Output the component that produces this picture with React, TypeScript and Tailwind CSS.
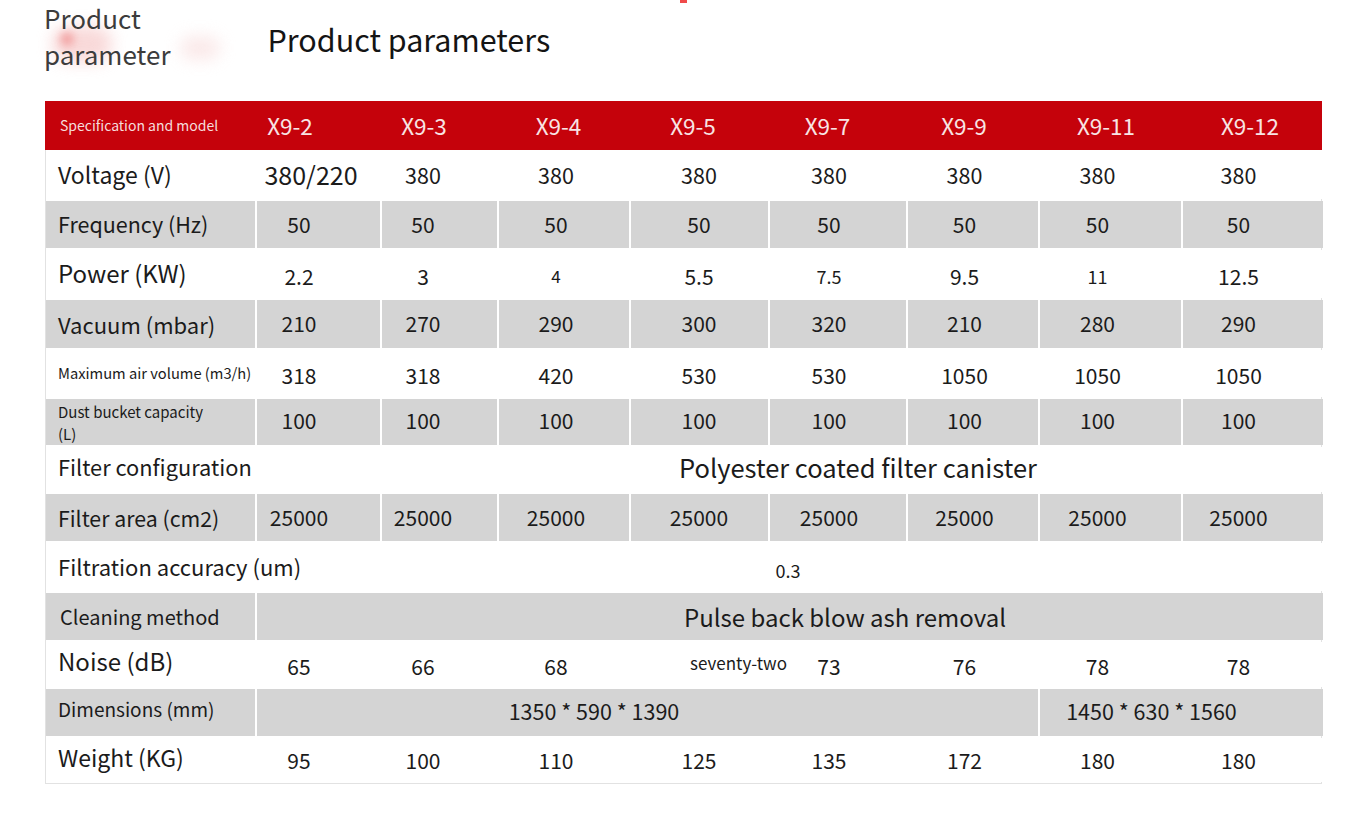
import React from 'react'

type Cell = { text: string; span?: string; cls?: string }
type Row = { label: React.ReactNode; labelCls: string; gray: boolean; cells: Cell[] }

// nudges the printed values a little left of the cell centre, as in the source sheet
const shift = ['pr-[39px]', 'pr-[33px]', 'pr-[16px]', 'pr-[1px]', 'pr-[18px]', 'pr-[17px]', 'pr-[26px]', 'pr-[29px]']

const models = ['X9-2', 'X9-3', 'X9-4', 'X9-5', 'X9-7', 'X9-9', 'X9-11', 'X9-12']

const plain = (vals: string[], cls = 'text-[21px]'): Cell[] => vals.map((v) => ({ text: v, cls }))

const rows: Row[] = [
  {
    label: 'Voltage (V)',
    labelCls: 'text-[23px]',
    gray: false,
    cells: [{ text: '380/220', cls: 'text-[25px] !pr-[15px]' }, ...plain(['380', '380', '380', '380', '380', '380', '380'], 'text-[21.5px] pt-[2px]')],
  },
  { label: 'Frequency (Hz)', labelCls: 'text-[21.5px]', gray: true, cells: plain(['50', '50', '50', '50', '50', '50', '50', '50']) },
  {
    label: 'Power (KW)',
    labelCls: 'text-[24px] pb-[2px]',
    gray: false,
    cells: [
      { text: '2.2', cls: 'text-[21px] pt-[6px]' },
      { text: '3', cls: 'text-[21px] pt-[6px]' },
      { text: '4', cls: 'text-[17px] pt-[4px]' },
      { text: '5.5', cls: 'text-[21px] pt-[6px]' },
      { text: '7.5', cls: 'text-[18px] pt-[4px]' },
      { text: '9.5', cls: 'text-[21px] pt-[6px]' },
      { text: '11', cls: 'text-[18px] pt-[4px]' },
      { text: '12.5', cls: 'text-[21px] pt-[6px]' },
    ],
  },
  { label: 'Vacuum (mbar)', labelCls: 'text-[22px]', gray: true, cells: plain(['210', '270', '290', '300', '320', '210', '280', '290']) },
  {
    label: 'Maximum air volume (m3/h)',
    labelCls: 'text-[14.7px]',
    gray: false,
    cells: plain(['318', '318', '420', '530', '530', '1050', '1050', '1050'], 'text-[21px] pt-[4px]'),
  },
  {
    label: (
      <span className="flex flex-col leading-[22px] pt-[2px]">
        <span>Dust bucket capacity</span>
        <span>(L)</span>
      </span>
    ),
    labelCls: 'text-[15px]',
    gray: true,
    cells: plain(['100', '100', '100', '100', '100', '100', '100', '100'], 'text-[21px] pb-[2px]'),
  },
  {
    label: 'Filter configuration',
    labelCls: 'text-[21.8px] pb-[5px]',
    gray: false,
    cells: [{ text: 'Polyester coated filter canister', span: 'col-span-8', cls: 'text-[25.5px] pl-[136px] pb-[4px]' }],
  },
  { label: 'Filter area (cm2)', labelCls: 'text-[21.3px]', gray: true, cells: plain(['25000', '25000', '25000', '25000', '25000', '25000', '25000', '25000']) },
  {
    label: 'Filtration accuracy (um)',
    labelCls: 'text-[22px] whitespace-nowrap pb-[2px] relative z-10 !bg-transparent',
    gray: false,
    cells: [{ text: '0.3', span: 'col-span-8', cls: 'text-[18px] pt-[6px] pr-[4px]' }],
  },
  {
    label: 'Cleaning method',
    labelCls: 'text-[20px] pl-[14px]',
    gray: true,
    cells: [{ text: 'Pulse back blow ash removal', span: 'col-span-8', cls: 'text-[24px] pl-[110px]' }],
  },
  {
    label: 'Noise (dB)',
    labelCls: 'text-[24px] pb-[8px]',
    gray: false,
    cells: [
      { text: '65', cls: 'text-[21px] pt-[4px]' },
      { text: '66', cls: 'text-[21px] pt-[4px]' },
      { text: '68', cls: 'text-[21px] pt-[4px]' },
      { text: 'seventy-two', cls: 'text-[17px] pb-[4px] !pr-0 pl-[78px] relative z-10 !bg-transparent' },
      { text: '73', cls: 'text-[21px] pt-[4px]' },
      { text: '76', cls: 'text-[21px] pt-[4px]' },
      { text: '78', cls: 'text-[21px] pt-[4px]' },
      { text: '78', cls: 'text-[21px] pt-[4px]' },
    ],
  },
  {
    label: 'Dimensions (mm)',
    labelCls: 'text-[19px] pb-[6px]',
    gray: true,
    cells: [
      { text: '1350 * 590 * 1390', span: 'col-span-6', cls: 'text-[21.5px] pb-[2px] pr-[107px]' },
      { text: '1450 * 630 * 1560', span: 'col-span-2', cls: 'text-[21.5px] pb-[2px] pr-[60px]' },
    ],
  },
  { label: 'Weight (KG)', labelCls: 'text-[23px] pb-[6px]', gray: false, cells: plain(['95', '100', '110', '125', '135', '172', '180', '180'], 'text-[21px] pt-[2px]') },
]

export default function App() {
  return (
    <div
      className="relative w-[1353px] h-[815px] overflow-hidden bg-white text-[#1b1b1b]"
      style={{ fontFamily: '"Noto Sans CJK SC", "Noto Sans", "Liberation Sans", sans-serif' }}
    >
      {/* faded watermark behind the small heading */}
      <div className="absolute left-[52px] top-[26px] w-[60px] h-[36px] rounded-full bg-[#f6c9c9] blur-[8px] opacity-70" />
      <div className="absolute left-[60px] top-[32px] w-[14px] h-[14px] rounded-full bg-[#f08a8a] blur-[4px] opacity-70" />
      <div className="absolute left-[180px] top-[36px] w-[40px] h-[24px] rounded-full bg-[#f8dcdc] blur-[8px] opacity-60" />
      <div className="absolute left-[680px] top-0 w-[7px] h-[3px] bg-[#f04a4a]" />

      {/* Heading */}
      <div className="relative flex items-start h-[101px]">
        <div className="pl-[44px] text-[26px] leading-[36px] text-[#3c3c3c]">
          <p>Product</p>
          <p>parameter</p>
        </div>
        <p className="ml-[97px] mt-[17px] text-[30.5px] leading-[44px] text-[#141414]">Product parameters</p>
      </div>

      {/* Table */}
      <div className="ml-[45px] w-[1277px]">
        <div className="grid grid-cols-[178px_134px_134px_135px_134px_135px_138px_146px_142px] h-[49px] bg-[#c5020b] items-center">
          <p className="pl-[15px] text-[14px] text-[#f6dcdc]">Specification and model</p>
          {models.map((m) => (
            <p key={m} className="text-center text-[22.5px] text-[#f8e4e4]">
              {m}
            </p>
          ))}
        </div>

        <div className="grid grid-cols-[209px_123px_115px_130px_137px_136px_130px_141px_140px] grid-rows-[49px_47px_48px_48px_47px_46px_45px_47px_48px_47px_45px_47px_44px] gap-x-[2px] gap-y-[2px] border-l border-r border-b border-[#e2e2e2] pb-[1px]">
          {rows.map((r, ri) => {
            const bg = r.gray ? 'bg-[#d4d4d4]' : 'bg-white'
            return (
              <React.Fragment key={ri}>
                <div className={`flex items-center pl-[12px] ${bg} ${r.labelCls}`}>{r.label}</div>
                {r.cells.map((c, ci) => (
                  <div
                    key={ci}
                    className={`flex items-center justify-center whitespace-nowrap ${bg} ${c.span ?? ''} ${c.span ? '' : shift[ci]} ${c.cls ?? ''}`}
                  >
                    {c.text}
                  </div>
                ))}
              </React.Fragment>
            )
          })}
        </div>
      </div>
    </div>
  )
}
